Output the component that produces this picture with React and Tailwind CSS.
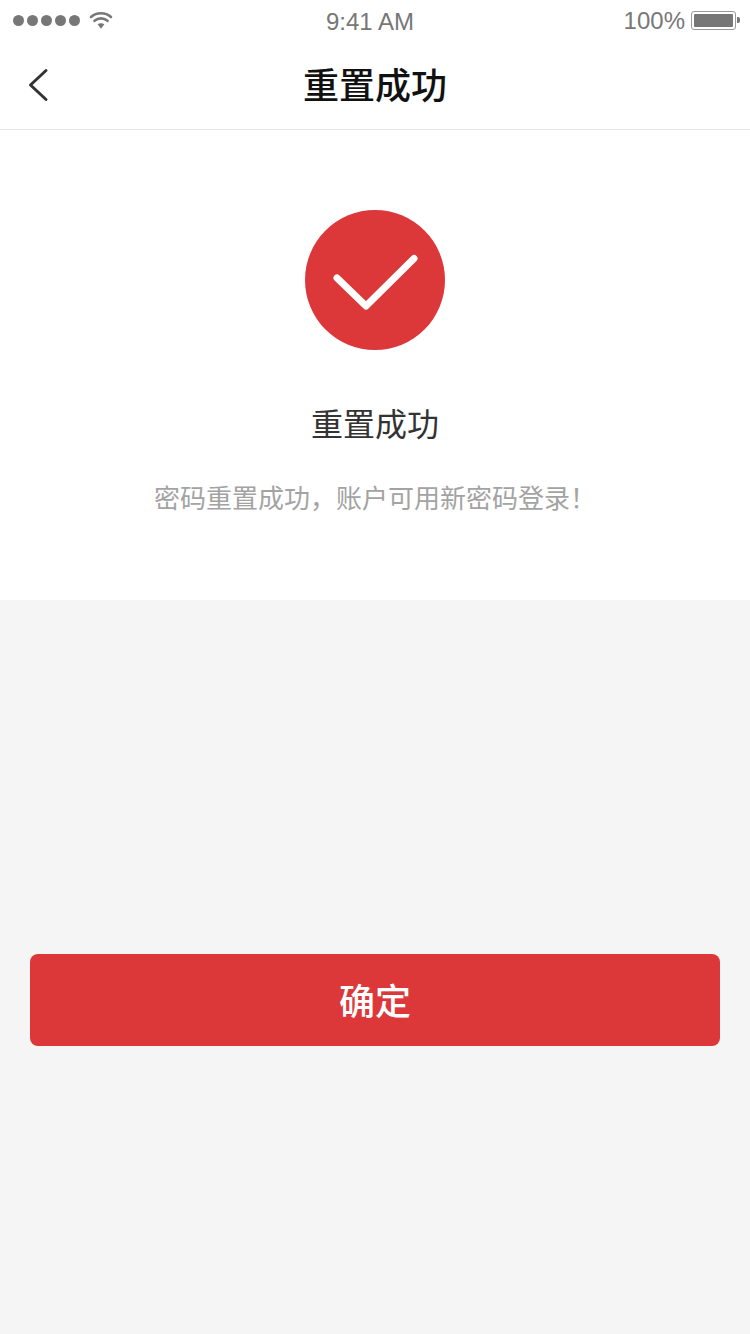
const cjk = { fontFamily: '"Noto Sans CJK SC", "Noto Sans", sans-serif' };

function Wifi() {
  return (
    <svg width="26" height="20" viewBox="0 0 26 20" fill="none" className="ml-[8px]">
      <path d="M3 7C8.5 2 17.5 2 23 7" stroke="#777" strokeWidth="2.6" strokeLinecap="round" />
      <path d="M6.5 10.8C10.2 7.6 15.8 7.6 19.5 10.8" stroke="#777" strokeWidth="2.6" strokeLinecap="round" />
      <path d="M9.6 14.2C11.6 12.8 14.4 12.8 16.4 14.2L13 18.8Z" fill="#777" />
    </svg>
  );
}

export default function App() {
  return (
    <div className="w-[750px] h-[1334px] flex flex-col bg-[#f6f5f6] overflow-hidden" style={cjk}>
      <div className="h-[40px] bg-white flex items-center justify-between pl-[13px] pr-[10px] text-[#777] text-[24px] font-['Liberation_Sans',sans-serif] relative">
        <div className="flex items-center">
          <div className="flex gap-[3px]">
            <span className="w-[11px] h-[11px] rounded-full bg-[#777]" />
            <span className="w-[11px] h-[11px] rounded-full bg-[#777]" />
            <span className="w-[11px] h-[11px] rounded-full bg-[#777]" />
            <span className="w-[11px] h-[11px] rounded-full bg-[#777]" />
            <span className="w-[11px] h-[11px] rounded-full bg-[#777]" />
          </div>
          <Wifi />
        </div>
        <span className="absolute left-[326px] top-[8px] leading-[28px]">9:41 AM</span>
        <div className="flex items-center">
          <span className="leading-[28px] mr-[6px] mt-[1px]">100%</span>
          <div className="w-[45px] h-[19px] rounded-[3px] border border-[#999] p-[2px]">
            <div className="w-full h-full bg-[#777] rounded-[1px]" />
          </div>
          <div className="w-[3px] h-[6px] bg-[#777] rounded-r-[2px] ml-[1px]" />
        </div>
      </div>

      <div className="h-[90px] bg-white border-b border-[#e6e6e6] flex items-center justify-center relative">
        <svg width="24" height="36" viewBox="0 0 24 36" fill="none" className="absolute left-[26px] top-[27px]">
          <path d="M20 3.5L4.5 18L20 32.5" stroke="#333" strokeWidth="3" strokeLinecap="round" strokeLinejoin="round" />
        </svg>
        <h1 className="text-[36px] font-medium text-[#111] leading-[50px] -mt-[3px]">重置成功</h1>
      </div>

      <div className="h-[470px] bg-white flex flex-col items-center pt-[80px]">
        <div className="w-[140px] h-[140px] rounded-full bg-[#dc383a] flex items-center justify-center">
          <svg width="140" height="140" viewBox="0 0 140 140" fill="none">
            <path d="M32 68L61 96L109 48.5" stroke="#fff" strokeWidth="7" strokeLinecap="round" strokeLinejoin="round" />
          </svg>
        </div>
        <p className="mt-[49px] text-[32px] leading-[46px] text-[#333]">重置成功</p>
        <p className="mt-[33px] text-[26px] leading-[38px] text-[#a3a3a3]">密码重置成功，账户可用新密码登录！</p>
      </div>

      <div className="px-[30px] pt-[354px]">
        <button className="w-full h-[92px] rounded-[8px] bg-[#dc383a] text-white text-[36px] font-medium pb-[3px]">确定</button>
      </div>
    </div>
  );
}
